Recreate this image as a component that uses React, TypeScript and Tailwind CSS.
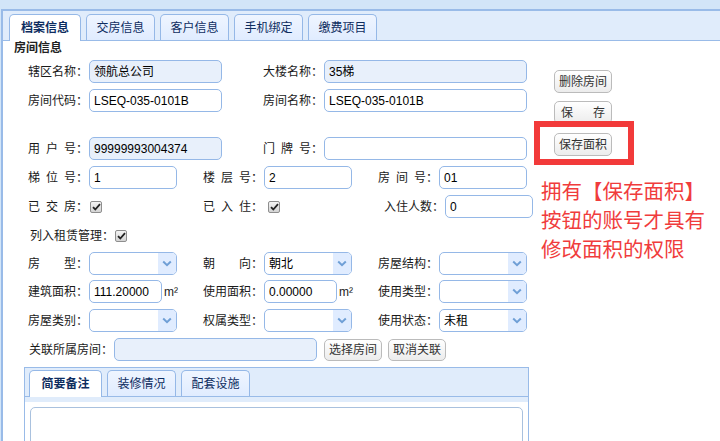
import React from "react";

const FONT = "font-['Liberation_Sans','Noto_Sans_CJK_SC',sans-serif]";

function Lbl({ text, w, pr = 1 }: { text: string; w: number; pr?: number }) {
  // spaces in labels are half-em (6px) gaps, like the original page
  const parts = text.split("").map((c, i) =>
    c === " " ? (
      <span key={i} className="inline-block w-[6px]" />
    ) : (
      <span key={i}>{c}</span>
    )
  );
  return (
    <div
      className="shrink-0 whitespace-nowrap text-right text-[12px] leading-[14px] text-[#1a1a1a]"
      style={{ width: w, paddingRight: pr }}
    >
      {parts}
    </div>
  );
}

function Field({ w, value = "", ro = false }: { w: number; value?: string; ro?: boolean }) {
  return (
    <div
      className={`flex h-[23px] shrink-0 items-center rounded-[5px] border border-[#95b8e7] pl-[4px] text-[12px] text-black ${
        ro ? "bg-[#e8f0fb]" : "bg-white"
      }`}
      style={{ width: w }}
    >
      {value}
    </div>
  );
}

function Combo({ w, value = "" }: { w: number; value?: string }) {
  return (
    <div
      className="flex h-[23px] shrink-0 overflow-hidden rounded-[5px] border border-[#95b8e7] bg-white text-[12px] text-black"
      style={{ width: w }}
    >
      <div className="flex flex-1 items-center pl-[4px]">{value}</div>
      <div className="flex w-[18px] items-center justify-center bg-[#e0ecff]">
        <svg width="10" height="7" viewBox="0 0 10 7">
          <path d="M1.2 1.5 L5 5.2 L8.8 1.5" fill="none" stroke="#6f9fd6" strokeWidth="2" />
        </svg>
      </div>
    </div>
  );
}

function Btn({ children, w = 58, h = 23, spread = false }: { children: React.ReactNode; w?: number; h?: number; spread?: boolean }) {
  return (
    <div
      className={`flex shrink-0 items-center rounded-[5px] border border-[#bbbbbb] bg-gradient-to-b from-white to-[#ececec] text-[12px] text-[#333] ${
        spread ? "justify-between px-[6px]" : "justify-center"
      }`}
      style={{ width: w, height: h }}
    >
      {children}
    </div>
  );
}

function Check({ ml = 1 }: { ml?: number }) {
  return (
    <div
      className="flex h-[12px] w-[12px] shrink-0 items-center justify-center rounded-[2px] border border-[#8e8e8e] bg-gradient-to-b from-[#f4f4f4] to-[#d4d4d4]"
      style={{ marginLeft: ml }}
    >
      <svg width="9" height="8" viewBox="0 0 9 8">
        <path d="M1 4.2 L3.3 6.5 L8 1.2" fill="none" stroke="#222" strokeWidth="1.8" />
      </svg>
    </div>
  );
}

function M2() {
  return (
    <div className="w-[15px] shrink-0 pl-[2px] text-[12px] leading-[14px] text-[#222]">
      m²
    </div>
  );
}

function Tab({ label, w, active = false }: { label: string; w: number; active?: boolean }) {
  return (
    <div
      className={`flex shrink-0 items-center justify-center rounded-t-[5px] border border-b-0 border-[#95b8e7] text-[12px] text-[#0e2d5f] ${
        active
          ? "relative -mb-px h-[27px] bg-white font-bold"
          : "h-[26px] bg-gradient-to-b from-[#eff5ff] to-[#e0ecff]"
      }`}
      style={{ width: w }}
    >
      {label}
    </div>
  );
}

const row = "flex h-[23px] items-center";

export default function App() {
  return (
    <div className={`h-[441px] w-[720px] overflow-hidden bg-[#d2e5f8] pt-[9px] ${FONT}`}>
      <div className="ml-[1px] h-[432px] border-l-2 border-t-2 border-[#99bbe8] bg-white">
        {/* main tabs */}
        <div className="flex h-[30px] items-end gap-[5px] border-b border-[#99bbe8] bg-[#e0ecfb] pl-[6px]">
          <Tab label="档案信息" w={72} active />
          <Tab label="交房信息" w={69} />
          <Tab label="客户信息" w={69} />
          <Tab label="手机绑定" w={69} />
          <Tab label="缴费项目" w={69} />
        </div>

        <div className="pl-[11px] text-[12px] font-bold leading-[14px] text-[#222]">房间信息</div>

        <div className="mt-[5px] flex items-start">
          {/* form */}
          <div className="w-[538px] shrink-0">
            <div className={row}>
              <Lbl text="辖区名称：" w={86} />
              <Field w={133} value="领航总公司" ro />
              <Lbl text="大楼名称：" w={102} />
              <Field w={203} value="35梯" ro />
            </div>
            <div className={`${row} mt-[6px]`}>
              <Lbl text="房间代码：" w={86} />
              <Field w={133} value="LSEQ-035-0101B" />
              <Lbl text="房间名称：" w={102} />
              <Field w={203} value="LSEQ-035-0101B" />
            </div>
            <div className={`${row} mt-[25px]`}>
              <Lbl text="用 户 号：" w={86} />
              <Field w={133} value="99999993004374" ro />
              <Lbl text="门 牌 号：" w={102} />
              <Field w={203} />
            </div>
            <div className={`${row} mt-[6px]`}>
              <Lbl text="梯 位 号：" w={86} />
              <Field w={88} value="1" />
              <Lbl text="楼 层 号：" w={87} />
              <Field w={88} value="2" />
              <Lbl text="房 间 号：" w={87} />
              <Field w={88} value="01" />
            </div>
            <div className={`${row} mt-[6px]`}>
              <Lbl text="已 交 房：" w={86} />
              <div className="flex w-[88px] shrink-0">
                <Check ml={1} />
              </div>
              <Lbl text="已 入 住：" w={87} />
              <div className="flex w-[88px] shrink-0">
                <Check ml={4} />
              </div>
              <Lbl text="入住人数：" w={93} />
              <Field w={88} value="0" />
            </div>
            <div className={`${row} mt-[6px]`}>
              <Lbl text="列入租赁管理：" w={112} />
              <Check ml={0} />
            </div>
            <div className={`${row} mt-[5px]`}>
              <Lbl text="房　　型：" w={86} />
              <Combo w={88} />
              <Lbl text="朝　　向：" w={87} />
              <Combo w={88} value="朝北" />
              <Lbl text="房屋结构：" w={87} />
              <Combo w={88} />
            </div>
            <div className={`${row} mt-[5px]`}>
              <Lbl text="建筑面积：" w={86} />
              <Field w={73} value="111.20000" />
              <M2 />
              <Lbl text="使用面积：" w={87} />
              <Field w={73} value="0.00000" />
              <M2 />
              <Lbl text="使用类型：" w={87} />
              <Combo w={88} />
            </div>
            <div className={`${row} mt-[6px]`}>
              <Lbl text="房屋类别：" w={86} />
              <Combo w={88} />
              <Lbl text="权属类型：" w={87} />
              <Combo w={88} />
              <Lbl text="使用状态：" w={87} />
              <Combo w={88} value="未租" />
            </div>
            <div className={`${row} mt-[6px]`}>
              <Lbl text="关联所属房间：" w={111} />
              <Field w={203} ro />
              <div className="ml-[7px]">
                <Btn h={22}>选择房间</Btn>
              </div>
              <div className="ml-[6px]">
                <Btn h={22}>取消关联</Btn>
              </div>
            </div>

            {/* sub tabs */}
            <div className="ml-[21px] mt-[6px] h-[80px] w-[505px] border border-b-0 border-[#99bbe8]">
              <div className="flex h-[29px] items-end gap-[5px] border-b border-[#99bbe8] bg-[#e0ecfb] pl-[4px]">
                <Tab label="简要备注" w={73} active />
                <Tab label="装修情况" w={69} />
                <Tab label="配套设施" w={69} />
              </div>
              <div className="h-[5px] bg-[#e0ecfb]" />
              <div className="px-[5px] pt-[5px]">
                <div className="h-[60px] w-[493px] rounded-[5px] border border-[#a9c1de] bg-white" />
              </div>
            </div>
          </div>

          {/* side buttons and note */}
          <div className="flex flex-col">
            <div className="ml-[13px] mt-[10px]">
              <Btn>删除房间</Btn>
            </div>
            <div className="ml-[13px] mt-[8px]">
              <Btn spread>
                <span>保</span>
                <span>存</span>
              </Btn>
            </div>
            <div className="relative ml-[13px] mt-[9px] w-[58px]">
              <Btn>保存面积</Btn>
              <div className="pointer-events-none absolute -bottom-[9px] -left-[20px] -right-[22px] -top-[12px] border-[6px] border-[#f23a3a]" />
            </div>
            <div className="mt-[21px] whitespace-nowrap text-[20.5px] leading-[29px] text-[#f03c3c]">
              <div>拥有【保存面积】</div>
              <div>按钮的账号才具有</div>
              <div>修改面积的权限</div>
            </div>
          </div>
        </div>
      </div>
    </div>
  );
}
